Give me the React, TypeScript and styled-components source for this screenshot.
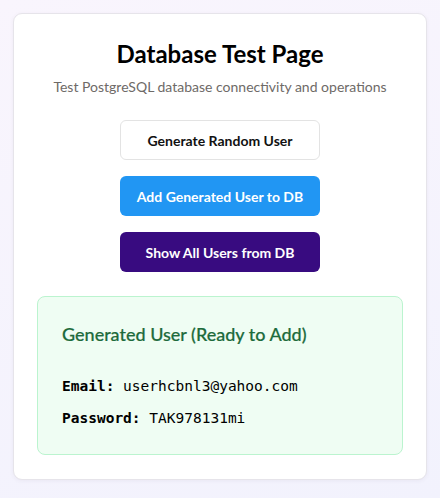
import React from "react";
import styled, { createGlobalStyle } from "styled-components";

const GlobalStyle = createGlobalStyle`
  html, body {
    margin: 0;
    padding: 0;
  }
  body {
    font-family: "Lato", "Noto Sans", sans-serif;
    background: linear-gradient(160deg, #f9f5fd 0%, #f2f2fd 100%);
    min-height: 498px;
  }
`;

const Page = styled.div`
  padding: 13px 13px 20px;
  box-sizing: border-box;
`;

const Card = styled.div`
  background: #ffffff;
  border: 1px solid #e6e4ea;
  border-radius: 9px;
  box-shadow: 0 1px 4px rgba(60, 50, 90, 0.06);
  padding: 24px 23px 24px;
  display: flex;
  flex-direction: column;
  align-items: center;
`;

const Title = styled.h1`
  margin: 0;
  font-size: 24px;
  line-height: 32px;
  font-weight: 700;
  color: #000;
`;

const Subtitle = styled.p`
  margin: 8px 0 0;
  font-size: 14px;
  line-height: 17px;
  color: #6e6a67;
`;

const Actions = styled.div`
  margin-top: 25px;
  display: flex;
  flex-direction: column;
  gap: 16px;
  align-items: center;
`;

type Variant = "plain" | "blue" | "purple";

const Button = styled.button<{ $variant: Variant }>`
  width: 200px;
  height: 40px;
  border-radius: 6px;
  font-family: inherit;
  font-size: 14px;
  font-weight: 700;
  cursor: pointer;
  border: 1px solid
    ${(p) => (p.$variant === "plain" ? "#e3e3e3" : "transparent")};
  background: ${(p) =>
    p.$variant === "blue"
      ? "#2196f3"
      : p.$variant === "purple"
      ? "#380b80"
      : "#ffffff"};
  color: ${(p) => (p.$variant === "plain" ? "#111" : "#ffffff")};
`;

const ResultBox = styled.div`
  align-self: stretch;
  margin-top: 24px;
  background: #effdf3;
  border: 1px solid #bbf4cf;
  border-radius: 8px;
  padding: 24px 24px 26px;
`;

const ResultTitle = styled.h2`
  margin: 0;
  font-size: 18px;
  line-height: 26px;
  font-weight: 500;
  color: #1d6b3c;
  -webkit-text-stroke: 0.2px #1d6b3c;
`;

const Field = styled.div<{ $first?: boolean }>`
  margin-top: ${(p) => (p.$first ? "29px" : "12px")};
  font-family: "DejaVu Sans Mono", monospace;
  font-size: 14.5px;
  line-height: 20px;
  color: #000;
`;

const Label = styled.strong`
  font-weight: 700;
`;

export default function App() {
  return (
    <>
      <GlobalStyle />
      <Page>
        <Card>
          <Title>Database Test Page</Title>
          <Subtitle>Test PostgreSQL database connectivity and operations</Subtitle>
          <Actions>
            <Button $variant="plain">Generate Random User</Button>
            <Button $variant="blue">Add Generated User to DB</Button>
            <Button $variant="purple">Show All Users from DB</Button>
          </Actions>
          <ResultBox>
            <ResultTitle>Generated User (Ready to Add)</ResultTitle>
            <Field $first>
              <Label>Email:</Label> userhcbnl3@yahoo.com
            </Field>
            <Field>
              <Label>Password:</Label> TAK978131mi
            </Field>
          </ResultBox>
        </Card>
      </Page>
    </>
  );
}
